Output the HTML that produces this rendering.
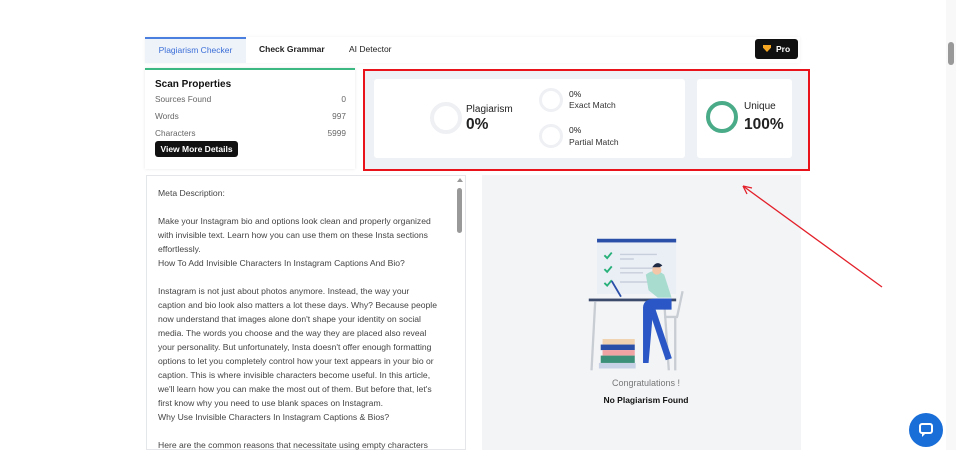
<!DOCTYPE html>
<html><head><meta charset="utf-8"><style>
*{margin:0;padding:0;box-sizing:border-box}
body{width:956px;height:450px;overflow:hidden;background:#fff;font-family:"Liberation Sans",sans-serif;position:relative;color:#222}
.abs{position:absolute}
.tabs{left:145px;top:37px;width:655px;height:26px;background:#fff;box-shadow:0 0 3px rgba(0,0,0,.06)}
.tab{position:absolute;top:0;height:26px;line-height:24px;font-size:8.5px;font-weight:bold;color:#222}
.scan{left:145px;top:68px;width:210px;height:101px;border-top:2px solid #3cb983;box-shadow:0 0 3px rgba(0,0,0,.1)}
.row{position:absolute;left:10px;right:9px;font-size:8.3px;color:#666;display:flex;justify-content:space-between}
.txt{left:146px;top:175px;width:320px;height:275px;border:1px solid #e4e6ea;font-size:8.6px;color:#444;line-height:14px;padding:10px 0 0 11px;white-space:nowrap}
</style></head><body>
<div class="abs tabs">
 <div class="tab" style="left:0;width:101px;background:#eef2f9;border-top:2px solid #4a7fe0;color:#3b6fd8;font-weight:normal;text-align:center;line-height:22px">Plagiarism Checker</div>
 <div class="tab" style="left:114px">Check Grammar</div>
 <div class="tab" style="left:204px;font-weight:normal;color:#222">AI Detector</div>
 <div style="position:absolute;left:610px;top:2px;width:43px;height:20px;background:#111;border-radius:3px;color:#fff;font-size:8.5px;font-weight:bold;line-height:20px"><span style="position:absolute;left:8px;top:6px;width:8px;height:7px;background:#f5a623;clip-path:polygon(0 0,100% 0,100% 40%,50% 100%,0 40%)"></span><span style="position:absolute;left:21px">Pro</span></div>
</div>
<div class="abs scan">
 <div style="position:absolute;left:10px;top:9px;font-size:10px;font-weight:bold;color:#111">Scan Properties</div>
 <div class="row" style="top:24px"><span>Sources Found</span><span>0</span></div>
 <div class="row" style="top:41px"><span>Words</span><span>997</span></div>
 <div class="row" style="top:58px"><span>Characters</span><span>5999</span></div>
 <div style="position:absolute;left:10px;top:71px;width:83px;height:16px;background:#111;border-radius:3px;color:#fff;font-size:8.5px;font-weight:bold;line-height:16px;text-align:center">View More Details</div>
</div>
<div class="abs" style="left:363px;top:69px;width:447px;height:102px;border:2px solid #e8131b;background:#eef1f6">
 <div style="position:absolute;left:9px;top:8px;width:311px;height:79px;background:#fff;border-radius:3px">
  <div style="position:absolute;left:56px;top:23px;width:32px;height:32px;border-radius:50%;border:4px solid #eef0f3"></div>
  <div style="position:absolute;left:92px;top:25px;font-size:10px">Plagiarism</div>
  <div style="position:absolute;left:92px;top:37px;font-size:15.5px;font-weight:bold">0%</div>
  <div style="position:absolute;left:165px;top:9px;width:24px;height:24px;border-radius:50%;border:3px solid #eef0f3"></div>
  <div style="position:absolute;left:165px;top:45px;width:24px;height:24px;border-radius:50%;border:3px solid #eef0f3"></div>
  <div style="position:absolute;left:195px;top:10px;font-size:8.5px">0%</div>
  <div style="position:absolute;left:195px;top:21px;font-size:8.5px;color:#333">Exact Match</div>
  <div style="position:absolute;left:195px;top:46px;font-size:8.5px">0%</div>
  <div style="position:absolute;left:195px;top:58px;font-size:8.5px;color:#333">Partial Match</div>
 </div>
 <div style="position:absolute;left:332px;top:8px;width:95px;height:79px;background:#fff;border-radius:3px">
  <div style="position:absolute;left:9px;top:22px;width:32px;height:32px;border-radius:50%;border:4px solid #4aab88"></div>
  <div style="position:absolute;left:47px;top:22px;font-size:10px">Unique</div>
  <div style="position:absolute;left:47px;top:37px;font-size:15.5px;font-weight:bold">100%</div>
 </div>
</div>
<div class="abs txt">Meta Description:<br><br>Make your Instagram bio and options look clean and properly organized<br>with invisible text. Learn how you can use them on these Insta sections<br>effortlessly.<br>How To Add Invisible Characters In Instagram Captions And Bio?<br><br>Instagram is not just about photos anymore. Instead, the way your<br>caption and bio look also matters a lot these days. Why? Because people<br>now understand that images alone don't shape your identity on social<br>media. The words you choose and the way they are placed also reveal<br>your personality. But unfortunately, Insta doesn't offer enough formatting<br>options to let you completely control how your text appears in your bio or<br>caption. This is where invisible characters become useful. In this article,<br>we'll learn how you can make the most out of them. But before that, let's<br>first know why you need to use blank spaces on Instagram.<br>Why Use Invisible Characters In Instagram Captions &amp; Bios?<br><br>Here are the common reasons that necessitate using empty characters
 <div style="position:absolute;right:2px;top:2px;width:0;height:0;border-left:3px solid transparent;border-right:3px solid transparent;border-bottom:4px solid #999"></div>
 <div style="position:absolute;right:3px;top:12px;width:5px;height:45px;background:#999;border-radius:3px"></div>
</div>
<div class="abs" style="left:482px;top:175px;width:319px;height:275px;background:#f3f4f6">
 <svg class="abs" style="left:104px;top:61px" width="115" height="138" viewBox="0 0 125 150">
  <rect x="12" y="3" width="86" height="60" fill="#eaeef5"/>
  <rect x="12" y="3" width="86" height="4" fill="#2a4fa8"/>
  <g stroke="#27b07a" stroke-width="2" fill="none"><path d="M20 21l3 3 5-6"/><path d="M20 36l3 3 5-6"/><path d="M20 51l3 3 5-6"/></g>
  <g stroke="#c8cfdc" stroke-width="1.5"><path d="M37 20h40M37 25h15M37 35h40M37 40h25M37 50h40"/></g>
  <path d="M28 49l10 17" stroke="#2a4fa8" stroke-width="2"/>
  <rect x="3" y="68" width="95" height="3" fill="#3b4a6b"/>
  <path d="M10 71l-4 75M85 71l5 75" stroke="#c8ccd3" stroke-width="2.5"/>
  <path d="M65 42q10-8 20 0l8 25h-15l-10-8z" fill="#a8dccf"/>
  <circle cx="77" cy="37" r="5" fill="#f4c7a8"/><path d="M72 34q5-8 11-2l-3 2z" fill="#1f2a44"/>
  <path d="M62 78q0-10 15-10h16v12h-20l-5 58h-6z" fill="#2a57c5"/>
  <path d="M72 80l18 54" stroke="#2a57c5" stroke-width="7"/>
  <path d="M105 60l-6 28M97 88v58M100 88h-15" stroke="#c8ccd3" stroke-width="2.5" fill="none"/>
  <rect x="18" y="112" width="35" height="6" fill="#f0d2b0"/><rect x="16" y="118" width="37" height="6" fill="#2a4fa8"/>
  <rect x="18" y="124" width="35" height="6" fill="#f0a3a3"/><rect x="16" y="130" width="37" height="8" fill="#3c8f78"/>
  <rect x="14" y="138" width="40" height="6" fill="#c8d2e6"/>
 </svg>
 <div class="abs" style="left:0;width:300px;top:203px;text-align:center;font-size:9px;color:#777;padding-left:28px">Congratulations !</div>
 <div class="abs" style="left:0;width:300px;top:220px;text-align:center;font-size:8.5px;font-weight:bold;color:#111;padding-left:28px">No Plagiarism Found</div>
</div>
<svg class="abs" style="left:0;top:0" width="956" height="450"><path d="M882 287L743 186" stroke="#e3202a" stroke-width="1.3"/><path d="M743 186l9 2M743 186l4 8" stroke="#e3202a" stroke-width="1.3"/></svg>
<div class="abs" style="left:946px;top:0;width:10px;height:450px;background:#f8f8f8"></div>
<div class="abs" style="left:948px;top:42px;width:6px;height:23px;background:#999;border-radius:3px"></div>
<div class="abs" style="left:909px;top:413px;width:34px;height:34px;border-radius:50%;background:#1a6ed8"><div style="position:absolute;left:10px;top:10px;width:14px;height:11px;border:2px solid #fff;border-radius:3px"></div><div style="position:absolute;left:13px;top:20px;width:4px;height:4px;background:#fff;clip-path:polygon(0 0,100% 0,0 100%)"></div></div>
</body></html>
